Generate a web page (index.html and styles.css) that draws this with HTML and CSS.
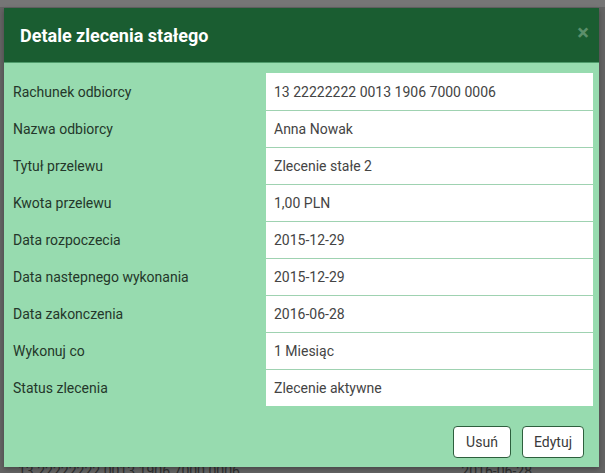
FILE: index.html
```html
<!DOCTYPE html>
<html lang="pl">
<head>
<meta charset="utf-8">
<title>Detale zlecenia stałego</title>
<link rel="stylesheet" href="styles.css">
</head>
<body>
<div class="page">
  <div class="page-strip"></div>
  <div class="page-row">
    <span class="pr-acc">13 22222222 0013 1906 7000 0006</span>
    <span class="pr-date">2016-06-28</span>
  </div>
</div>

<div class="modal">
  <div class="modal-header">
    <h1 class="modal-title">Detale zlecenia stałego</h1>
    <span class="modal-close">×</span>
  </div>
  <div class="modal-body">
    <div class="details">
      <div class="row"><div class="label">Rachunek odbiorcy</div><div class="value">13 22222222 0013 1906 7000 0006</div></div>
      <div class="row"><div class="label">Nazwa odbiorcy</div><div class="value">Anna Nowak</div></div>
      <div class="row"><div class="label">Tytuł przelewu</div><div class="value">Zlecenie stałe 2</div></div>
      <div class="row"><div class="label">Kwota przelewu</div><div class="value">1,00 PLN</div></div>
      <div class="row"><div class="label">Data rozpoczecia</div><div class="value">2015-12-29</div></div>
      <div class="row"><div class="label">Data nastepnego wykonania</div><div class="value">2015-12-29</div></div>
      <div class="row"><div class="label">Data zakonczenia</div><div class="value">2016-06-28</div></div>
      <div class="row"><div class="label">Wykonuj co</div><div class="value">1 Miesiąc</div></div>
      <div class="row"><div class="label">Status zlecenia</div><div class="value">Zlecenie aktywne</div></div>
    </div>
    <div class="modal-footer">
      <button class="btn">Usuń</button>
      <button class="btn">Edytuj</button>
    </div>
  </div>
</div>
</body>
</html>
```

FILE: styles.css
```css
html, body {
  margin: 0;
  padding: 0;
}
body {
  width: 605px;
  height: 473px;
  overflow: hidden;
  background: #646464;
  font-family: Roboto, "Liberation Sans", Arial, sans-serif;
  position: relative;
}
.page {
  display: flex;
  flex-direction: column;
  height: 473px;
}
.page-strip {
  height: 7px;
  background: #767676;
}
.page-row {
  margin-top: auto;
  height: 14px;
  display: flex;
  font-size: 14px;
  color: #2e2e2e;
  line-height: 14px;
  position: relative;
  top: 5px;
}
.pr-acc {
  margin-left: 18px;
}
.pr-date {
  margin-left: auto;
  margin-right: 73px;
}
.modal {
  position: absolute;
  left: 4px;
  top: 8px;
  width: 595px;
  height: 459px;
  background: #97dbaf;
  display: flex;
  flex-direction: column;
  box-shadow: 0 2px 5px rgba(0,0,0,0.3);
}
.modal-header {
  background: #1a5d31;
  border-bottom: 1px solid #4f9c6c;
  display: flex;
  align-items: center;
  padding: 0 10px 0 16px;
  box-sizing: border-box;
  height: 55px;
}
.modal-title {
  margin: 0;
  font-size: 18px;
  font-weight: 700;
  color: #ffffff;
  flex: 1;
}
.modal-close {
  font-size: 22px;
  font-weight: 700;
  color: #5b8f6b;
  line-height: 1;
  position: relative;
  top: -2px;
}
.modal-body {
  padding: 10px 6px 0 0;
  display: flex;
  flex-direction: column;
}
.details {
  display: flex;
  flex-direction: column;
}
.row {
  display: grid;
  grid-template-columns: 262px 1fr;
  height: 37px;
}
.label {
  padding-left: 9px;
  display: flex;
  align-items: center;
  font-size: 14px;
  color: #24372a;
}
.value {
  background: #ffffff;
  padding-left: 8px;
  display: flex;
  align-items: center;
  font-size: 14px;
  color: #444444;
  box-sizing: border-box;
}
.row + .row .value {
  border-top: 1px solid #9fd2b1;
}
.modal-footer {
  display: flex;
  justify-content: flex-end;
  gap: 11px;
  padding: 20px 9px 0 0;
}
.btn {
  height: 32px;
  padding: 0 11px;
  min-width: 58px;
  background: #ffffff;
  border: 1px solid #2d5f3d;
  border-radius: 4px;
  font-family: Roboto, "Liberation Sans", Arial, sans-serif;
  font-size: 14px;
  color: #3a3a3a;
}
```
